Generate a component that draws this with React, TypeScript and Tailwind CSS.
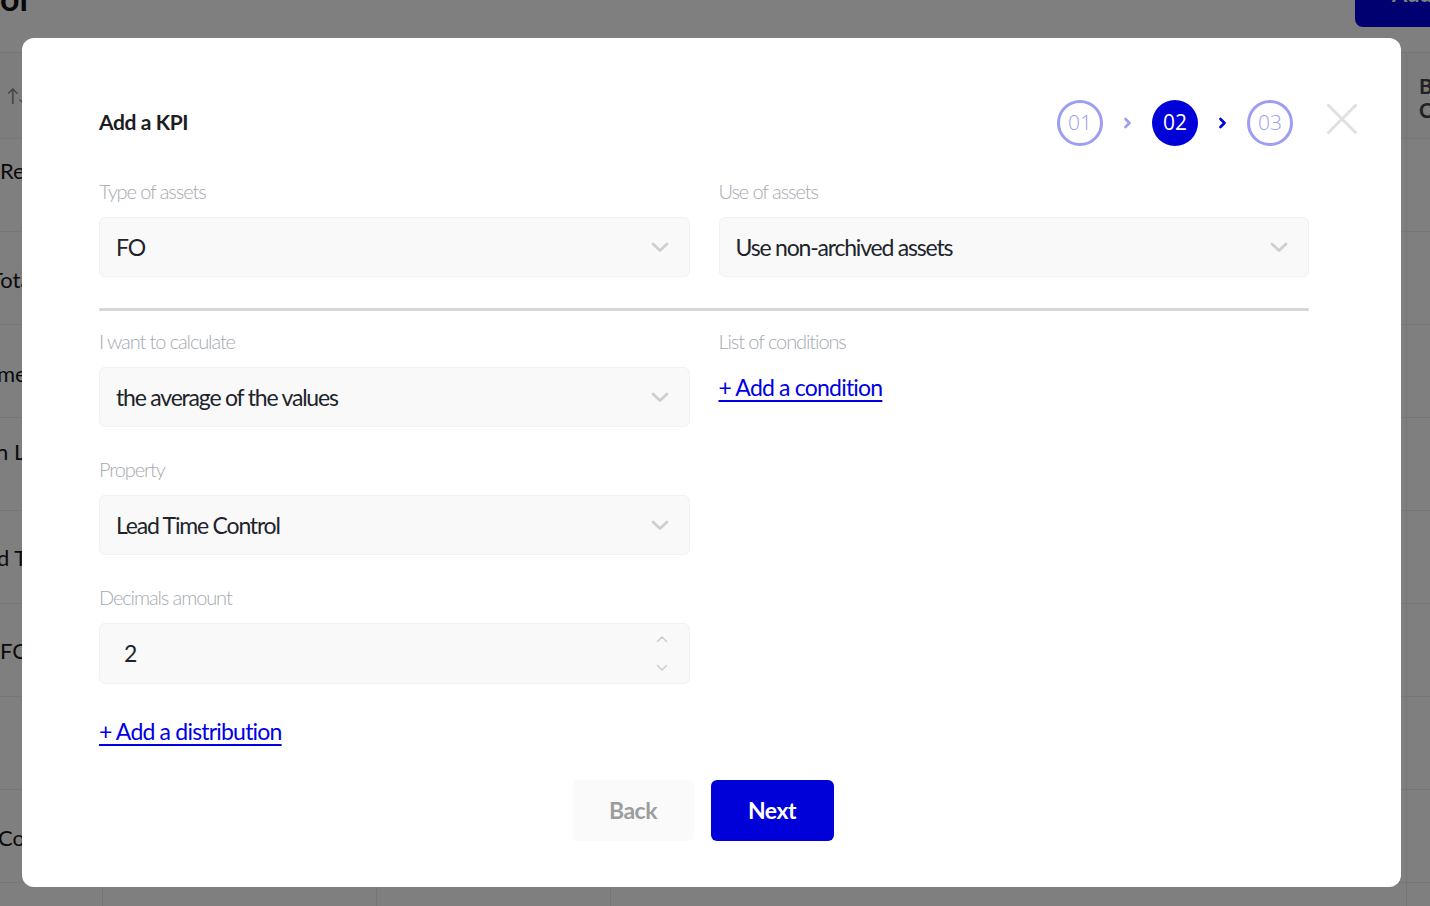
import React from "react";

function ChevronDown({ className = "" }: { className?: string }) {
  return (
    <svg width="18" height="11" viewBox="0 0 18 11" fill="none" className={className}>
      <path d="M2 2 L9 8.5 L16 2" stroke="currentColor" strokeWidth="2.8" strokeLinecap="round" strokeLinejoin="round" />
    </svg>
  );
}

function SmallChevron({ up = false }: { up?: boolean }) {
  return (
    <svg width="12" height="8" viewBox="0 0 12 8" fill="none">
      <path
        d={up ? "M1.5 6.5 L6 2 L10.5 6.5" : "M1.5 1.5 L6 6 L10.5 1.5"}
        stroke="currentColor"
        strokeWidth="1.6"
        strokeLinecap="round"
        strokeLinejoin="round"
      />
    </svg>
  );
}

function StepChevron({ className = "" }: { className?: string }) {
  return (
    <svg width="7" height="12" viewBox="0 0 7 12" fill="none" className={className}>
      <path d="M1.5 2 L5.5 6 L1.5 10" stroke="currentColor" strokeWidth="2.6" strokeLinecap="round" strokeLinejoin="round" />
    </svg>
  );
}

function Label({ children }: { children: React.ReactNode }) {
  return (
    <div className="text-[20px] leading-[24px] font-light tracking-[-1.1px] text-[#a6aab1]">{children}</div>
  );
}

function Select({ value }: { value: string }) {
  return (
    <div className="mt-[14px] h-[60px] rounded-[6px] bg-[#f9f9f9] border border-[#f1f1f1] flex items-center justify-between pl-[16px] pr-[20px]">
      <span className="text-[23px] tracking-[-1.2px] text-[#20232b]">{value}</span>
      <ChevronDown className="text-[#cfcfcf]" />
    </div>
  );
}

function Field({ label, value }: { label: string; value: string }) {
  return (
    <div className="flex flex-col">
      <Label>{label}</Label>
      <Select value={value} />
    </div>
  );
}

const rows: { text: string; cls: string }[] = [
  { text: "Re", cls: "pt-[18px] ml-0" },
  { text: "Tota", cls: "pt-[34px] -ml-[10px]" },
  { text: "me", cls: "pt-[35px] -ml-[3px]" },
  { text: "n Lo", cls: "pt-[20px] -ml-[4px]" },
  { text: "d T", cls: "pt-[33px] -ml-[3px]" },
  { text: "FC", cls: "pt-[33px] ml-0" },
  { text: "", cls: "pt-[33px]" },
  { text: "Cor", cls: "pt-[34px] -ml-[2px]" },
  { text: "", cls: "pt-[33px]" },
];

export default function App() {
  return (
    <div className="relative w-[1430px] h-[906px] overflow-hidden bg-white font-['Lato',sans-serif]">
      {/* underlying page */}
      <div className="h-[52px] flex items-start justify-between">
        <div className="-mt-[22px] text-[34px] font-bold text-[#111] leading-[40px]">ol</div>
        <div className="-mt-[17px] w-[110px] h-[44px] rounded-[8px] bg-[#0000e0] mr-[-35px] pl-[37px] pt-[0px] text-white text-[22px] font-bold leading-[22px]">
          Add
        </div>
      </div>
      <div className="h-[87px] border-t border-b border-[#ececec] bg-[#fafafa] flex items-center justify-between">
        <div className="pl-[6px] text-[18px] tracking-[-2px] text-[#888]">↑↓</div>
        <div className="w-[24px] border-l border-[#ececec] h-full pl-[12px] pt-[21px] text-[21px] font-bold leading-[24px] text-[#444]">
          B<br />C
        </div>
      </div>
      {rows.map((r, i) => (
        <div key={i} className="h-[93px] border-b border-[#ececec] flex">
          <div className={"text-[22px] leading-[28px] text-[#151515] " + r.cls}>{r.text}</div>
          <div className="ml-auto w-[24px] border-l border-[#ececec]" />
        </div>
      ))}
      <div className="absolute left-[102px] top-[885px] h-[30px] w-[275px] border-l border-r border-[#ececec]" />
      <div className="absolute left-[610px] top-[885px] h-[30px] border-l border-[#ececec]" />

      {/* overlay */}
      <div className="absolute inset-0 bg-black/50 pl-[22px] pt-[38px]">
        <div className="relative w-[1379px] h-[849px] bg-white rounded-[12px] pl-[77px] pr-[92px] pt-[62px]">
          <button className="absolute right-[44px] top-[66px] w-[30px] h-[30px] text-[#e0e0e0]">
            <svg width="30" height="30" viewBox="0 0 30 30" fill="none">
              <path d="M1.5 1.5 L28.5 28.5 M28.5 1.5 L1.5 28.5" stroke="currentColor" strokeWidth="3" strokeLinecap="round" />
            </svg>
          </button>

          <div className="h-[46px] flex items-center justify-between pr-[16px]">
            <div className="-mt-[2px] text-[21px] font-bold tracking-[-0.4px] text-[#1d1d1f]">Add a KPI</div>
            <div className="flex items-center gap-[21px] font-['Open_Sans',sans-serif] font-light">
              <div className="w-[46px] h-[46px] rounded-full border-[3px] border-[#9d9df3] text-[#9d9df3] flex items-center justify-center text-[21px]">
                01
              </div>
              <StepChevron className="text-[#9d9df3]" />
              <div className="w-[46px] h-[46px] rounded-full bg-[#0000d8] text-white flex items-center justify-center text-[21px] font-normal">
                02
              </div>
              <StepChevron className="text-[#0000d8]" />
              <div className="w-[46px] h-[46px] rounded-full border-[3px] border-[#9d9df3] text-[#9d9df3] flex items-center justify-center text-[21px]">
                03
              </div>
            </div>
          </div>

          <div className="mt-[33px] grid grid-cols-2 gap-x-[29px]">
            <Field label="Type of assets" value="FO" />
            <Field label="Use of assets" value="Use non-archived assets" />
          </div>

          <div className="mt-[31px] h-[3px] rounded-full bg-[#d7d7d7]" />

          <div className="mt-[18px] grid grid-cols-2 gap-x-[29px]">
            <div className="flex flex-col gap-[30px]">
              <Field label="I want to calculate" value="the average of the values" />
              <Field label="Property" value="Lead Time Control" />
              <div className="flex flex-col">
                <Label>Decimals amount</Label>
                <div className="mt-[14px] h-[61px] rounded-[6px] bg-[#f9f9f9] border border-[#f1f1f1] flex items-center justify-between pl-[24px] pr-[21px]">
                  <span className="text-[23px] tracking-[-1px] text-[#20232b]">2</span>
                  <div className="flex flex-col gap-[21px] text-[#cfcfcf]">
                    <SmallChevron up />
                    <SmallChevron />
                  </div>
                </div>
              </div>
            </div>
            <div className="flex flex-col">
              <Label>List of conditions</Label>
              <a className="mt-[20px] text-[23px] leading-[28px] tracking-[-0.8px] text-[#0000e6] underline underline-offset-[4px] decoration-[1.5px] self-start cursor-pointer">
                + Add a condition
              </a>
            </div>
          </div>

          <a className="block mt-[33px] text-[23px] leading-[28px] tracking-[-0.8px] text-[#0000e6] underline underline-offset-[4px] decoration-[1.5px] w-fit cursor-pointer">
            + Add a distribution
          </a>

          <div className="mt-[35px] flex justify-center gap-[17px] pr-[2px]">
            <button className="w-[121px] h-[61px] rounded-[6px] bg-[#fafafa] text-[#9d9d9d] text-[23px] font-bold tracking-[-0.5px]">
              Back
            </button>
            <button className="w-[123px] h-[61px] rounded-[6px] bg-[#0000d8] text-white text-[23px] font-bold tracking-[-0.5px]">
              Next
            </button>
          </div>
        </div>
      </div>
    </div>
  );
}
